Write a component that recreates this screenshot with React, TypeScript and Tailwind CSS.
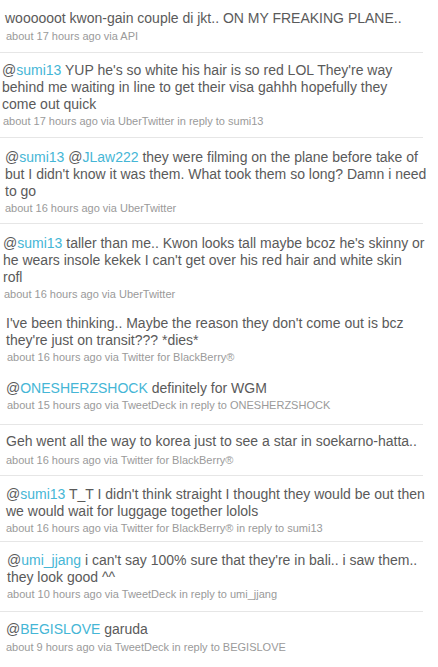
import React from "react";

type Part = string | { m: string };
type Tweet = {
  parts: Part[];
  meta: string;
  cls: string;
  metaCls: string;
  sep: boolean;
};

const tweets: Tweet[] = [
  {
    parts: ["woooooot kwon-gain couple di jkt.. ON MY FREAKING PLANE.."],
    meta: "about 17 hours ago via API",
    cls: "pt-[10px] pb-[9px] pl-[5px]",
    metaCls: "mt-[2px] pl-[1px]",
    sep: true,
  },
  {
    parts: [{ m: "sumi13" }, " YUP he's so white his hair is so red LOL They're way behind me waiting in line to get their visa gahhh hopefully they come out quick"],
    meta: "about 17 hours ago via UberTwitter in reply to sumi13",
    cls: "pt-[9px] pb-[9px] pl-[2px]",
    metaCls: "mt-[1px] pl-[1px]",
    sep: true,
  },
  {
    parts: [{ m: "sumi13" }, " ", { m: "JLaw222" }, " they were filming on the plane before take of but I didn't know it was them. What took them so long? Damn i need to go"],
    meta: "about 16 hours ago via UberTwitter",
    cls: "pt-[11px] pb-[8px] pl-[5px]",
    metaCls: "mt-[1px]",
    sep: true,
  },
  {
    parts: [{ m: "sumi13" }, " taller than me.. Kwon looks tall maybe bcoz he's skinny or he wears insole kekek I can't get over his red hair and white skin rofl"],
    meta: "about 16 hours ago via UberTwitter",
    cls: "pt-[11px] pb-[6px] pl-[3px]",
    metaCls: "mt-[1px] pl-[1px]",
    sep: false,
  },
  {
    parts: ["I've been thinking.. Maybe the reason they don't come out is bcz they're just on transit??? *dies*"],
    meta: "about 16 hours ago via Twitter for BlackBerry®",
    cls: "pt-[8px] pb-[8px] pl-[6px]",
    metaCls: "mt-[1px] pl-[1px]",
    sep: false,
  },
  {
    parts: [{ m: "ONESHERZSHOCK" }, " definitely for WGM"],
    meta: "about 15 hours ago via TweetDeck in reply to ONESHERZSHOCK",
    cls: "pt-[8px] pb-[12px] pl-[6px]",
    metaCls: "mt-[1px] pl-[1px]",
    sep: true,
  },
  {
    parts: ["Geh went all the way to korea just to see a star in soekarno-hatta.."],
    meta: "about 16 hours ago via Twitter for BlackBerry®",
    cls: "pt-[8px] pb-[8px] pl-[6px]",
    metaCls: "mt-[3px]",
    sep: true,
  },
  {
    parts: [{ m: "sumi13" }, " T_T I didn't think straight I thought they would be out then we would wait for luggage together lolols"],
    meta: "about 16 hours ago via Twitter for BlackBerry® in reply to sumi13",
    cls: "pt-[10px] pb-[6px] pl-[6px]",
    metaCls: "mt-[1px]",
    sep: true,
  },
  {
    parts: [{ m: "umi_jjang" }, " i can't say 100% sure that they're in bali.. i saw them.. they look good ^^"],
    meta: "about 10 hours ago via TweetDeck in reply to umi_jjang",
    cls: "pt-[10px] pb-[10px] pl-[7px]",
    metaCls: "mt-[1px]",
    sep: true,
  },
  {
    parts: [{ m: "BEGISLOVE" }, " garuda"],
    meta: "about 9 hours ago via TweetDeck in reply to BEGISLOVE",
    cls: "pt-[9px] pb-[12px] pl-[6px]",
    metaCls: "mt-[2px]",
    sep: false,
  },
];

export default function App() {
  return (
    <div
      className="w-[438px] h-[667px] overflow-hidden bg-white"
      style={{ fontFamily: '"Liberation Sans", Arial, sans-serif' }}
    >
      {tweets.map((t, i) => (
        <div key={i} className="flex flex-col">
          <div className={t.cls}>
            <div className="w-[421.75px] text-[14px] leading-[17px] text-[#5a5a5a]">
              {t.parts.map((p, j) =>
                typeof p === "string" ? (
                  <span key={j}>{p}</span>
                ) : (
                  <span key={j}>
                    @<span className="text-[#45b6d6]">{p.m}</span>
                  </span>
                )
              )}
            </div>
            <div className={`${t.metaCls} text-[11px] leading-[14px] text-[#9a9a9a]`}>
              {t.meta}
            </div>
          </div>
          {t.sep && <div className="h-px w-[423px] bg-[#e6e6e6]" />}
        </div>
      ))}
    </div>
  );
}
